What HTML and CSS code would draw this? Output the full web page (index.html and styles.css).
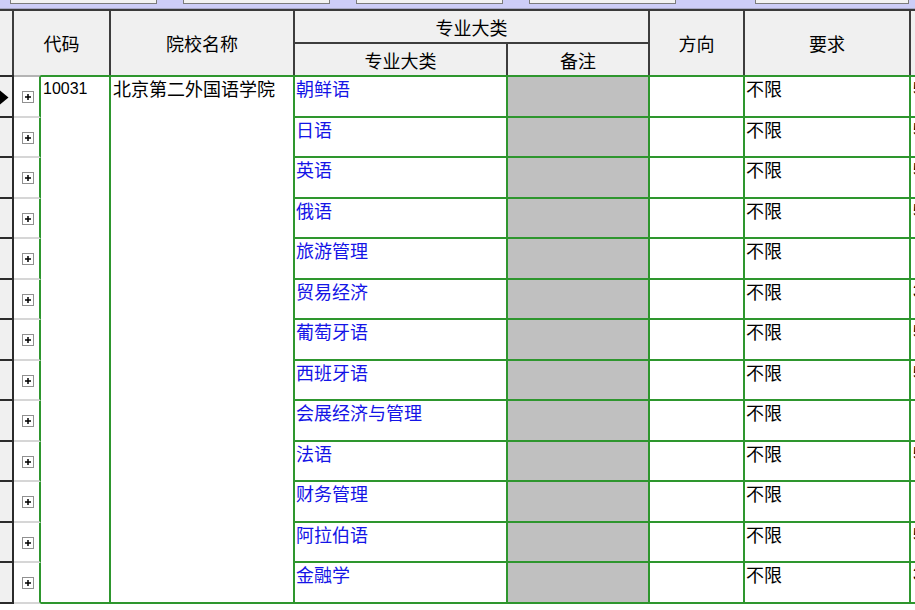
FILE: index.html
```html
<!DOCTYPE html>
<html lang="zh-CN">
<head>
<meta charset="utf-8">
<title>专业列表</title>
<link rel="stylesheet" href="styles.css">
</head>
<body>
<div class="topbar">
  <div class="tb-box b1"></div>
  <div class="tb-box b2"></div>
  <div class="tb-box b3"></div>
  <div class="tb-box b4"></div>
  <div class="tb-box b5"></div>
</div>
<div class="grid">
  <div class="h h-sel"></div>
  <div class="h h-code">代码</div>
  <div class="h h-name">院校名称</div>
  <div class="h h-group">专业大类</div>
  <div class="h h-major">专业大类</div>
  <div class="h h-note">备注</div>
  <div class="h h-dir">方向</div>
  <div class="h h-req">要求</div>
  <div class="h h-extra"></div>

  <div class="c code">10031</div>
  <div class="c name">北京第二外国语学院</div>

  <div class="sel first"><svg class="arrow" width="9" height="15" viewBox="0 0 9 15"><path d="M0 0.5 L8.5 7.5 L0 14.5 Z" fill="#000"/></svg></div>
  <div class="plus first"><svg width="12" height="12" viewBox="0 0 12 12"><rect x="0.5" y="0.5" width="11" height="11" fill="#fff" stroke="#909090"/><path d="M3 6 H9 M6 3 V9" stroke="#000" stroke-width="1.5"/></svg></div>
  <div class="c major first">朝鲜语</div>
  <div class="c note first"></div>
  <div class="c dir first"></div>
  <div class="c req first">不限</div>
  <div class="c extra first">5</div>

  <div class="sel"></div>
  <div class="plus"><svg width="12" height="12" viewBox="0 0 12 12"><rect x="0.5" y="0.5" width="11" height="11" fill="#fff" stroke="#909090"/><path d="M3 6 H9 M6 3 V9" stroke="#000" stroke-width="1.5"/></svg></div>
  <div class="c major">日语</div>
  <div class="c note"></div>
  <div class="c dir"></div>
  <div class="c req">不限</div>
  <div class="c extra">5</div>

  <div class="sel"></div>
  <div class="plus"><svg width="12" height="12" viewBox="0 0 12 12"><rect x="0.5" y="0.5" width="11" height="11" fill="#fff" stroke="#909090"/><path d="M3 6 H9 M6 3 V9" stroke="#000" stroke-width="1.5"/></svg></div>
  <div class="c major">英语</div>
  <div class="c note"></div>
  <div class="c dir"></div>
  <div class="c req">不限</div>
  <div class="c extra">5</div>

  <div class="sel"></div>
  <div class="plus"><svg width="12" height="12" viewBox="0 0 12 12"><rect x="0.5" y="0.5" width="11" height="11" fill="#fff" stroke="#909090"/><path d="M3 6 H9 M6 3 V9" stroke="#000" stroke-width="1.5"/></svg></div>
  <div class="c major">俄语</div>
  <div class="c note"></div>
  <div class="c dir"></div>
  <div class="c req">不限</div>
  <div class="c extra">5</div>

  <div class="sel"></div>
  <div class="plus"><svg width="12" height="12" viewBox="0 0 12 12"><rect x="0.5" y="0.5" width="11" height="11" fill="#fff" stroke="#909090"/><path d="M3 6 H9 M6 3 V9" stroke="#000" stroke-width="1.5"/></svg></div>
  <div class="c major">旅游管理</div>
  <div class="c note"></div>
  <div class="c dir"></div>
  <div class="c req">不限</div>
  <div class="c extra"></div>

  <div class="sel"></div>
  <div class="plus"><svg width="12" height="12" viewBox="0 0 12 12"><rect x="0.5" y="0.5" width="11" height="11" fill="#fff" stroke="#909090"/><path d="M3 6 H9 M6 3 V9" stroke="#000" stroke-width="1.5"/></svg></div>
  <div class="c major">贸易经济</div>
  <div class="c note"></div>
  <div class="c dir"></div>
  <div class="c req">不限</div>
  <div class="c extra">3</div>

  <div class="sel"></div>
  <div class="plus"><svg width="12" height="12" viewBox="0 0 12 12"><rect x="0.5" y="0.5" width="11" height="11" fill="#fff" stroke="#909090"/><path d="M3 6 H9 M6 3 V9" stroke="#000" stroke-width="1.5"/></svg></div>
  <div class="c major">葡萄牙语</div>
  <div class="c note"></div>
  <div class="c dir"></div>
  <div class="c req">不限</div>
  <div class="c extra">5</div>

  <div class="sel"></div>
  <div class="plus"><svg width="12" height="12" viewBox="0 0 12 12"><rect x="0.5" y="0.5" width="11" height="11" fill="#fff" stroke="#909090"/><path d="M3 6 H9 M6 3 V9" stroke="#000" stroke-width="1.5"/></svg></div>
  <div class="c major">西班牙语</div>
  <div class="c note"></div>
  <div class="c dir"></div>
  <div class="c req">不限</div>
  <div class="c extra">5</div>

  <div class="sel"></div>
  <div class="plus"><svg width="12" height="12" viewBox="0 0 12 12"><rect x="0.5" y="0.5" width="11" height="11" fill="#fff" stroke="#909090"/><path d="M3 6 H9 M6 3 V9" stroke="#000" stroke-width="1.5"/></svg></div>
  <div class="c major">会展经济与管理</div>
  <div class="c note"></div>
  <div class="c dir"></div>
  <div class="c req">不限</div>
  <div class="c extra"></div>

  <div class="sel"></div>
  <div class="plus"><svg width="12" height="12" viewBox="0 0 12 12"><rect x="0.5" y="0.5" width="11" height="11" fill="#fff" stroke="#909090"/><path d="M3 6 H9 M6 3 V9" stroke="#000" stroke-width="1.5"/></svg></div>
  <div class="c major">法语</div>
  <div class="c note"></div>
  <div class="c dir"></div>
  <div class="c req">不限</div>
  <div class="c extra">5</div>

  <div class="sel"></div>
  <div class="plus"><svg width="12" height="12" viewBox="0 0 12 12"><rect x="0.5" y="0.5" width="11" height="11" fill="#fff" stroke="#909090"/><path d="M3 6 H9 M6 3 V9" stroke="#000" stroke-width="1.5"/></svg></div>
  <div class="c major">财务管理</div>
  <div class="c note"></div>
  <div class="c dir"></div>
  <div class="c req">不限</div>
  <div class="c extra"></div>

  <div class="sel"></div>
  <div class="plus"><svg width="12" height="12" viewBox="0 0 12 12"><rect x="0.5" y="0.5" width="11" height="11" fill="#fff" stroke="#909090"/><path d="M3 6 H9 M6 3 V9" stroke="#000" stroke-width="1.5"/></svg></div>
  <div class="c major">阿拉伯语</div>
  <div class="c note"></div>
  <div class="c dir"></div>
  <div class="c req">不限</div>
  <div class="c extra">5</div>

  <div class="sel"></div>
  <div class="plus"><svg width="12" height="12" viewBox="0 0 12 12"><rect x="0.5" y="0.5" width="11" height="11" fill="#fff" stroke="#909090"/><path d="M3 6 H9 M6 3 V9" stroke="#000" stroke-width="1.5"/></svg></div>
  <div class="c major">金融学</div>
  <div class="c note"></div>
  <div class="c dir"></div>
  <div class="c req">不限</div>
  <div class="c extra">3</div>
</div>
</body>
</html>
```

FILE: styles.css
```css
* { box-sizing: border-box; }

html, body {
  margin: 0;
  padding: 0;
}

body {
  width: 915px;
  height: 610px;
  overflow: hidden;
  background: #ffffff;
  font-family: "Noto Sans CJK SC", "Noto Sans", sans-serif;
  font-size: 18px;
  color: #000;
}

/* top toolbar strip */
.topbar {
  height: 9px;
  background: #cdcdf7;
  border-bottom: 1px solid #a8a8c4;
  display: flex;
  align-items: flex-start;
  padding-left: 10px;
  gap: 26px;
}

.tb-box {
  height: 4px;
  width: 147px;
  background: #f3f3f3;
  border: 1px solid #7c7c7c;
  border-top: none;
}

.tb-box.b5 {
  width: 154px;
  margin-left: 53px;
}

/* grid */
.grid {
  display: grid;
  grid-template-columns: 14px 27px 70px 184px 213px 142px 95px 166px 1fr;
  grid-template-rows: 33px 31px 42.5px repeat(12, 40.5px);
  border-top: 2px solid #3a3a3a;
}

.h {
  background: #f0f0f0;
  border-right: 2px solid #3d3d3d;
  display: flex;
  align-items: center;
  justify-content: center;
  line-height: 20px;
}

.h-sel   { grid-column: 1;     grid-row: 1 / 3; }
.h-code  { grid-column: 2 / 4; grid-row: 1 / 3; }
.h-name  { grid-column: 4;     grid-row: 1 / 3; }
.h-group { grid-column: 5 / 7; grid-row: 1; border-bottom: 2px solid #3d3d3d; }
.h-major { grid-column: 5;     grid-row: 2; }
.h-note  { grid-column: 6;     grid-row: 2; }
.h-dir   { grid-column: 7;     grid-row: 1 / 3; }
.h-req   { grid-column: 8;     grid-row: 1 / 3; }
.h-extra { grid-column: 9;     grid-row: 1 / 3; border-right: none; }

/* body cells */
.sel {
  grid-column: 1;
  background: #f0f0f0;
  border-right: 2px solid #2b2b2b;
  border-bottom: 2px solid #2b2b2b;
  display: flex;
  align-items: center;
  padding: 2px 0 0 0;
}

.sel.first { border-top: 2px solid #2b2b2b; }

.arrow { display: block; }

.plus {
  grid-column: 2;
  background: #fff;
  border-right: 2px solid #2e962e;
  border-bottom: 2px solid #d6d6d6;
  display: flex;
  align-items: center;
  padding: 2px 0 0 8px;
}

.plus svg { display: block; }

.plus.first { border-top: 2px solid #b4b4b4; }

.c {
  border-right: 2px solid #2e962e;
  border-bottom: 2px solid #2e962e;
  line-height: 20px;
  padding: 1px 0 0 1px;
  white-space: nowrap;
}

.c.first { border-top: 2px solid #2e962e; }

.code {
  grid-column: 3;
  grid-row: 3 / 16;
  border-top: 2px solid #2e962e;
  font-family: "Liberation Sans", sans-serif;
  font-size: 16px;
  padding: 2px 0 0 2px;
}

.name {
  grid-column: 4;
  grid-row: 3 / 16;
  border-top: 2px solid #2e962e;
  padding-left: 2px;
}

.major { grid-column: 5; color: #1414e6; }
.note  { grid-column: 6; background: #c0c0c0; }
.dir   { grid-column: 7; }
.req   { grid-column: 8; }

.extra {
  grid-column: 9;
  border-right: none;
  font-family: "Liberation Sans", sans-serif;
  font-size: 16px;
  padding: 2px 0 0 2px;
}
```
